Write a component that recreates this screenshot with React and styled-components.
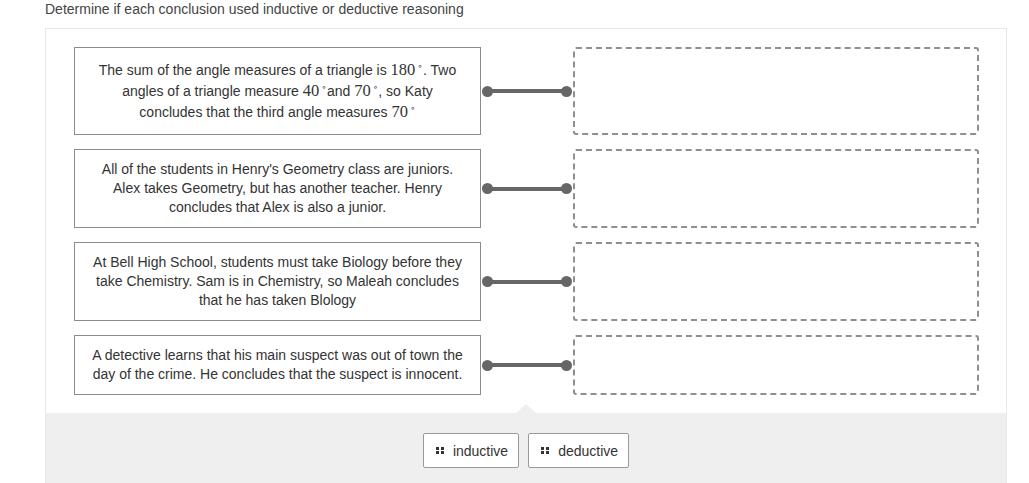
import React from "react";
import styled, { createGlobalStyle } from "styled-components";

const GlobalStyle = createGlobalStyle`
  html, body {
    margin: 0;
    padding: 0;
    background: #fff;
  }
  body {
    font-family: "Liberation Sans", Arial, sans-serif;
    color: #333;
  }
`;

const Page = styled.div`
  padding-left: 45px;
  width: 962px;
`;

const Prompt = styled.div`
  font-size: 14px;
  line-height: 18px;
  color: #444;
  margin: 0 0 10px 0;
`;

const Panel = styled.div`
  border: 1px solid #e8e8e8;
  border-bottom: none;
`;

const Board = styled.div`
  display: flex;
  flex-direction: column;
  gap: 14px;
  padding: 18px 28px 18px 28px;
`;

const Row = styled.div`
  display: grid;
  grid-template-columns: 407px 92px 406px;
  align-items: stretch;
`;

const Statement = styled.div`
  border: 1px solid #8c8c8c;
  padding: ${(p) => (p.$math ? "12px 15px 11px" : "10px 15px")};
  font-size: 14px;
  line-height: ${(p) => (p.$math ? "21px" : "19px")};
  text-align: center;
  color: #333;
`;

const M = styled.span`
  font-family: "Liberation Serif", "Times New Roman", serif;
  font-size: 16.5px;
  line-height: 0;
  sup {
    font-family: "DejaVu Sans", sans-serif;
    font-size: 9px;
    line-height: 0;
    vertical-align: 6px;
    margin-left: 2px;
  }
`;

const Connector = styled.div`
  display: flex;
  align-items: center;
  padding: 0 1px 0 1px;
`;

const Wire = styled.div`
  flex: 1;
  display: flex;
  align-items: center;
  &::before,
  &::after {
    content: "";
    width: 11px;
    height: 11px;
    border-radius: 50%;
    background: #666;
    flex-shrink: 0;
  }
  span {
    flex: 1;
    height: 4px;
    background: #666;
    margin: 0 -2px;
  }
`;

const Drop = styled.div`
  border: 2px dashed #8f8f8f;
  border-radius: 3px;
`;

const Tray = styled.div`
  position: relative;
  background: #efefef;
  display: flex;
  justify-content: center;
  gap: 9px;
  padding: 20px 0 16px 0;
  &::before {
    content: "";
    position: absolute;
    top: -9px;
    left: 50%;
    margin-left: -10px;
    border-left: 10px solid transparent;
    border-right: 10px solid transparent;
    border-bottom: 9px solid #efefef;
  }
`;

const Chip = styled.div`
  display: flex;
  align-items: center;
  gap: 9px;
  height: 35px;
  box-sizing: border-box;
  padding: 0 10px 0 12px;
  background: #fff;
  border: 1px solid #9a9a9a;
  border-radius: 2px;
  font-size: 14px;
  color: #333;
`;

const Grip = () => (
  <svg width="8" height="7" viewBox="0 0 8 7">
    <rect x="0" y="0" width="3" height="3" fill="#333" />
    <rect x="5" y="0" width="3" height="3" fill="#333" />
    <rect x="0" y="4" width="3" height="3" fill="#333" />
    <rect x="5" y="4" width="3" height="3" fill="#333" />
  </svg>
);

const Deg = ({ n }) => (
  <M>
    {n}
    <sup>∘</sup>
  </M>
);

const rows = [
  {
    math: true,
    text: (
      <>
        The sum of the angle measures of a triangle is <Deg n="180" />. Two
        angles of a triangle measure <Deg n="40" />and <Deg n="70" />, so Katy
        concludes that the third angle measures <Deg n="70" />
      </>
    ),
  },
  {
    text:
      "All of the students in Henry's Geometry class are juniors. Alex takes Geometry, but has another teacher. Henry concludes that Alex is also a junior.",
  },
  {
    text:
      "At Bell High School, students must take Biology before they take Chemistry. Sam is in Chemistry, so Maleah concludes that he has taken Blology",
  },
  {
    text:
      "A detective learns that his main suspect was out of town the day of the crime. He concludes that the suspect is innocent.",
  },
];

export default function App() {
  return (
    <Page>
      <GlobalStyle />
      <Prompt>Determine if each conclusion used inductive or deductive reasoning</Prompt>
      <Panel>
        <Board>
          {rows.map((r, i) => (
            <Row key={i}>
              <Statement $math={r.math}>{r.text}</Statement>
              <Connector>
                <Wire>
                  <span />
                </Wire>
              </Connector>
              <Drop />
            </Row>
          ))}
        </Board>
        <Tray>
          <Chip>
            <Grip />
            inductive
          </Chip>
          <Chip>
            <Grip />
            deductive
          </Chip>
        </Tray>
      </Panel>
    </Page>
  );
}
